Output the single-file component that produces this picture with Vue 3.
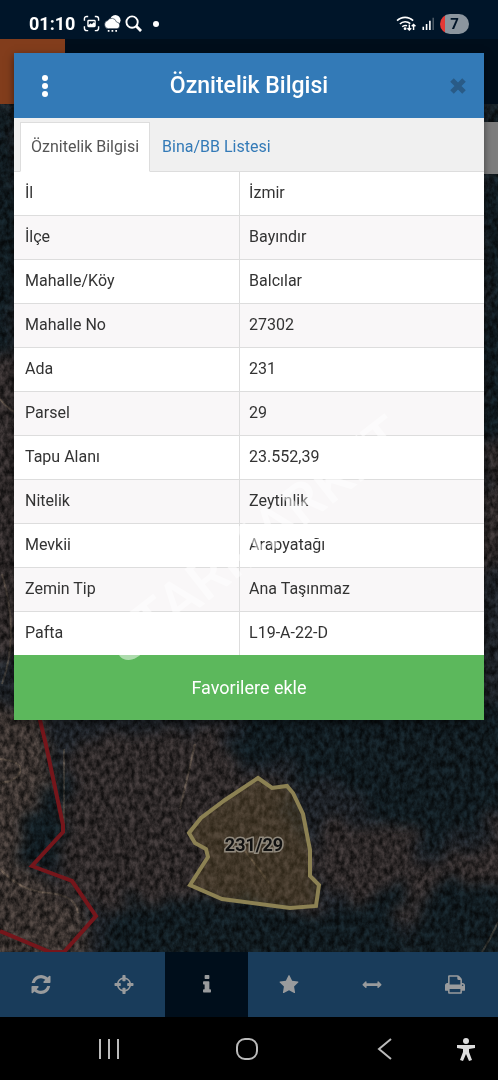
<script setup>
import { ref } from 'vue'

const activeTab = ref('oznitelik')
const activeTool = ref('info')

const rows = ref([
  { label: 'İl', value: 'İzmir' },
  { label: 'İlçe', value: 'Bayındır' },
  { label: 'Mahalle/Köy', value: 'Balcılar' },
  { label: 'Mahalle No', value: '27302' },
  { label: 'Ada', value: '231' },
  { label: 'Parsel', value: '29' },
  { label: 'Tapu Alanı', value: '23.552,39' },
  { label: 'Nitelik', value: 'Zeytinlik' },
  { label: 'Mevkii', value: 'Arapyatağı' },
  { label: 'Zemin Tip', value: 'Ana Taşınmaz' },
  { label: 'Pafta', value: 'L19-A-22-D' }
])

const tools = [
  {
    id: 'refresh',
    title: 'Yenile',
    box: '0 0 1536 1536',
    path: 'M1511 928q0 5-1 7-64 268-268 434.500T764 1536q-146 0-282.500-55T238 1324l-129 129q-19 19-45 19t-45-19-19-45V960q0-26 19-45t45-19h448q26 0 45 19t19 45-19 45l-137 137q71 66 161 102t187 36q134 0 250-65t186-179q11-17 53-117 8-23 30-23h192q13 0 22.500 9.500t9.500 22.500zm25-800v448q0 26-19 45t-45 19h-448q-26 0-45-19t-19-45 19-45l138-138Q969 256 768 256q-134 0-250 65T332 500q-11 17-53 117-8 23-30 23H50q-13 0-22.500-9.500T18 608v-7q65-268 270-434.500T768 0q146 0 284 55.500T1297 212l130-129q19-19 45-19t45 19 19 45z'
  },
  {
    id: 'locate',
    title: 'Konum',
    box: '0 0 1536 1536',
    path: 'M1197 896h-109q-26 0-45-19t-19-45V704q0-26 19-45t45-19h109q-32-108-112.500-188.500T896 339v109q0 26-19 45t-45 19H704q-26 0-45-19t-19-45V339q-108 32-188.500 112.500T339 640h109q26 0 45 19t19 45v128q0 26-19 45t-45 19H339q32 108 112.500 188.500T640 1197v-109q0-26 19-45t45-19h128q26 0 45 19t19 45v109q108-32 188.500-112.500T1197 896zm339-192v128q0 26-19 45t-45 19h-143q-37 161-154.500 278.500T896 1329v143q0 26-19 45t-45 19H704q-26 0-45-19t-19-45v-143q-161-37-278.500-154.500T207 896H64q-26 0-45-19T0 832V704q0-26 19-45t45-19h143q37-161 154.500-278.500T640 207V64q0-26 19-45t45-19h128q26 0 45 19t19 45v143q161 37 278.500 154.500T1329 640h143q26 0 45 19t19 45z'
  },
  {
    id: 'info',
    title: 'Bilgi',
    box: '-448 0 1536 1536',
    path: 'M640 1216v128q0 26-19 45t-45 19H64q-26 0-45-19t-19-45v-128q0-26 19-45t45-19h64V768H64q-26 0-45-19T0 704V576q0-26 19-45t45-19h384q26 0 45 19t19 45v576h64q26 0 45 19t19 45zM512 64v192q0 26-19 45t-45 19H192q-26 0-45-19t-19-45V64q0-26 19-45t45-19h256q26 0 45 19t19 45z'
  },
  {
    id: 'favorites',
    title: 'Favoriler',
    box: '0 0 1664 1664',
    path: 'M1664 615q0 22-26 48l-363 354 86 500q1 7 1 20 0 21-10.500 35.500T1321 1587q-19 0-40-12l-449-236-449 236q-22 12-40 12-21 0-31.500-14.500T301 1537q0-6 2-20l86-500L25 663Q0 636 0 615q0-37 56-46l502-73L783 41q19-41 49-41t49 41l225 455 502 73q56 9 56 46z'
  },
  {
    id: 'measure',
    title: 'Ölçüm',
    box: '0 -560 1792 1792',
    path: 'M1792 352q0 26-19 45l-256 256q-19 19-45 19t-45-19-19-45V480H384v128q0 26-19 45t-45 19-45-19L19 397Q0 378 0 352t19-45L275 51q19-19 45-19t45 19 19 45v128h1024V96q0-26 19-45t45-19 45 19l256 256q19 19 19 45z'
  },
  {
    id: 'print',
    title: 'Yazdır',
    box: '0 0 1664 1536',
    path: 'M384 1408h896v-256H384v256zm0-640h896V384h-160q-40 0-68-28t-28-68V128H384v640zm1152 64q0-26-19-45t-45-19-45 19-19 45 19 45 45 19 45-19 19-45zm128 0v416q0 13-9.500 22.500t-22.500 9.500h-224v160q0 40-28 68t-68 28H352q-40 0-68-28t-28-68v-160H32q-13 0-22.500-9.500T0 1248V832q0-79 56.500-135.500T192 640h64V96q0-40 28-68t68-28h672q40 0 88 20t76 48l152 152q28 28 48 76t20 88v256h64q79 0 135.500 56.500T1664 832z'
  }
]
</script>

<template>
  <div class="phone">
    <header class="status-bar">
      <div class="status-group">
        <span class="clock">01:10</span>
        <svg class="status-icon" viewBox="0 0 18 18">
          <path d="M1.500 6V4a2.500 2.500 0 0 1 2.500-2.500h1.500M12.500 1.500H14A2.500 2.500 0 0 1 16.500 4v2M16.500 12v2a2.500 2.500 0 0 1-2.500 2.500h-1.500M5.500 16.500H4A2.500 2.500 0 0 1 1.500 14v-2" fill="none" stroke="#fff" stroke-width="1.500" />
          <path fill-rule="evenodd" d="M6 5h6a1.500 1.500 0 0 1 1.500 1.500v5A1.500 1.500 0 0 1 12 13H6a1.500 1.500 0 0 1-1.500-1.500v-5A1.500 1.500 0 0 1 6 5zm0 5.500 2-1.800 1.400 1.100 1.800-2 1 .8V6.500H6z" fill="#fff" />
        </svg>
        <svg class="status-icon" viewBox="0 0 18 18">
          <circle cx="12" cy="5.500" r="5.500" fill="#fff" />
          <path d="M4.500 14.500a4.400 4.400 0 0 1-.7-8.600 5.200 5.200 0 0 1 9.400 1.500 3.600 3.600 0 0 1 .7 7.100z" fill="#fff" stroke="#001529" stroke-width=".6" />
          <path d="M4 16.800h1.800M8 16.800h1.800M12 16.800h1.800" stroke="#fff" stroke-width="1.800" />
        </svg>
        <svg class="status-icon" viewBox="0 0 18 18">
          <circle cx="7.500" cy="7.500" r="6" fill="none" stroke="#fff" stroke-width="2" />
          <path d="m11.500 11.500 5.500 5.500" stroke="#fff" stroke-width="3" />
        </svg>
        <span class="status-dot"></span>
      </div>
      <div class="status-group status-right">
        <svg class="wifi" viewBox="0 0 22 18">
          <path d="M1 6a12 12 0 0 1 17 0M4 9.500a8 8 0 0 1 11-.3M6.500 12.500a4.500 4.500 0 0 1 5-1" fill="none" stroke="#fff" stroke-width="1.700" />
          <path d="M14 10v6M12 14l2 2 2-2M18.500 16v-6M16.500 12l2-2 2 2" fill="none" stroke="#fff" stroke-width="1.500" />
          <circle cx="9.500" cy="14.500" r="1.500" fill="#fff" />
        </svg>
        <svg class="signal" viewBox="0 0 14 18">
          <path d="M2 12.500V16M5.500 9.500V16M9 6v10" stroke="#fff" stroke-width="1.700" />
          <path d="M12.500 3v13" stroke="#53606c" stroke-width="1.500" />
        </svg>
        <span class="battery">7</span>
      </div>
    </header>

    <main class="screen">
      <div class="app-header"><span class="menu-block"></span></div>

      <div class="map">
        <svg class="map-canvas" viewBox="0 0 498 848" preserveAspectRatio="xMidYMax slice">
          <defs>
            <filter id="grain" x="0" y="0" width="100%" height="100%" color-interpolation-filters="sRGB">
              <feTurbulence type="fractalNoise" baseFrequency="0.2 0.14" numOctaves="4" seed="8" />
              <feColorMatrix values="1.8 0 0 0 -0.4  1.8 0 0 0 -0.4  1.8 0 0 0 -0.4  0 0 0 0 1" />
            </filter>
            <filter id="soft" x="-20%" y="-20%" width="140%" height="140%" color-interpolation-filters="sRGB">
              <feTurbulence type="fractalNoise" baseFrequency="0.03" numOctaves="4" seed="3" />
              <feDisplacementMap in="SourceGraphic" scale="50" xChannelSelector="R" yChannelSelector="G" />
              <feGaussianBlur stdDeviation="6" />
            </filter>
          </defs>
          <rect width="498" height="848" fill="#1c2025" />
          <g filter="url(#soft)">
            <path d="M-40 600h76l24 120-30 50 62 40-30 70H-40z" class="soil-light" />
            <path d="M70 640l110-20 60 20 20 70-60 40 0 50-90 10-60-20z" class="soil" />
            <path d="M190 720l68-50 30 10 30 110-10 20-115-10z" class="soil" />
            <path d="M330 710l70 10 40 40 90-50v50l-120 60-60-20-40-50z" class="soil" />
            <path d="M230 600h300v100l-90 40-90-50-60-30-50-10z" class="forest" />
            <path d="M110 802l90-10 130 22 70-30 0 90H100z" class="forest" />
            <path d="M410 800l120-40v120H400z" class="forest" />
            <path d="M52 640l15 90-30 36-25-15 25-40z" class="forest" />
            <path d="M-20 0h40v240l-40 30zM480 0h60v330h-60z" class="forest" />
            <path d="M-20 250l50 20v260l-50 30zM480 340h50v120h-50z" class="soil" />
          </g>
          <g class="tracks">
            <path d="M0 655q22 2 20 12t-20 12M2 470q18 60 0 110M64 645v75M0 765q20 22 48 24t30 20M498 818q-6 14-16 30M195 640l-15 65M0 295q8 10 15 13M240 740l30 40" />
          </g>
          <rect width="498" height="848" filter="url(#grain)" class="grain" />
          <path d="M258 674l14 10 15-2 6 7 10 21 7 36v26l9 9-3 21-26 2-68-9-32-14 18-28-2-8-11-6-6-10 12-15 24-18z" class="parcel" />
          <path d="M39 612l7 29 17 80v7l-31 34 40 15 24 35-32 36H50L0 827" class="border-line" />
          <text x="254" y="747" class="parcel-label">231/29</text>
        </svg>
        <span class="side-button"></span>
      </div>

      <nav class="toolbar">
        <button
          v-for="t in tools"
          :key="t.id"
          type="button"
          :class="['tool', { active: activeTool === t.id }]"
          :aria-label="t.title"
          @click="activeTool = t.id"
        >
          <svg :viewBox="t.box" class="tool-icon"><path :d="t.path" /></svg>
        </button>
      </nav>

      <section class="modal">
        <div class="modal-header">
          <button type="button" class="header-btn" aria-label="Menü">
            <svg viewBox="0 0 24 24"><circle cx="12" cy="4" r="3" /><circle cx="12" cy="12" r="3" /><circle cx="12" cy="20" r="3" /></svg>
          </button>
          <h1>Öznitelik Bilgisi</h1>
          <button type="button" class="header-btn close" aria-label="Kapat">
            <svg viewBox="0 0 24 24"><path d="M6 6l12 12M18 6L6 18" /></svg>
          </button>
        </div>

        <div class="tabs">
          <button type="button" :class="['tab', { selected: activeTab === 'oznitelik' }]" @click="activeTab = 'oznitelik'">Öznitelik Bilgisi</button>
          <button type="button" :class="['tab', { selected: activeTab === 'bina' }]" @click="activeTab = 'bina'">Bina/BB Listesi</button>
        </div>

        <table class="info-table">
          <tbody>
            <tr v-for="r in rows" :key="r.label">
              <th scope="row">{{ r.label }}</th>
              <td>{{ r.value }}</td>
            </tr>
          </tbody>
        </table>

        <button type="button" class="favorite">Favorilere ekle</button>
        <span class="watermark" aria-hidden="true">STARMARKET</span>
      </section>
    </main>

    <footer class="system-nav">
      <button type="button" class="nav-btn" aria-label="Son uygulamalar">
        <svg viewBox="0 0 24 24"><path d="M3 2v20M12 2v20M21 2v20" /></svg>
      </button>
      <button type="button" class="nav-btn" aria-label="Ana ekran">
        <svg viewBox="0 0 24 24"><rect x="2" y="2" width="20" height="20" rx="8" /></svg>
      </button>
      <button type="button" class="nav-btn" aria-label="Geri">
        <svg viewBox="0 0 24 24"><path d="M18 2L6 12l12 10" /></svg>
      </button>
      <button type="button" class="nav-btn access" aria-label="Erişilebilirlik">
        <svg viewBox="0 0 24 24"><circle cx="12" cy="4" r="3" /><path d="M3 8h18v3l-6 1v3l3 8-3 1-3-7-3 7-3-1 3-8v-3l-6-1z" /></svg>
      </button>
    </footer>
  </div>
</template>

<style>
body { margin: 0; background: #000; }
</style>

<style scoped>
.phone {
  display: flex;
  flex-direction: column;
  min-height: 100vh;
  font-family: Roboto, "Liberation Sans", sans-serif;
  color: #333;
}

button {
  padding: 0;
  border: 0;
  background: none;
  font: inherit;
  cursor: pointer;
}

svg { display: block; }

/* --- STATUS BAR --- */
.status-bar {
  display: flex;
  justify-content: space-between;
  align-items: center;
  box-sizing: border-box;
  height: 39px;
  padding: 8px 29px 0;
  background: #001529;
}

.status-group { display: flex; align-items: center; gap: 4px; }
.clock { margin-right: 4px; color: #fff; font-size: 18px; font-weight: bold; line-height: 20px; }
.status-icon { width: 17px; height: 17px; }
.status-dot { width: 6px; height: 6px; margin-left: 7px; border-radius: 50%; background: #fff; }
.wifi { width: 21px; height: 17px; }
.signal { width: 14px; height: 17px; margin-right: 1px; }

.battery {
  width: 29px;
  border-radius: 10px;
  background: linear-gradient(90deg, #e53935 5px, #8b959e 5px);
  color: #001529;
  font-size: 15px;
  font-weight: bold;
  line-height: 20px;
  text-align: center;
}

/* --- MAP --- */
.screen { position: relative; display: flex; flex: 1; flex-direction: column; }
.app-header { display: flex; height: 65px; background: #000e1b; }
.menu-block { width: 65px; background: #823d1c; }
.map { position: relative; flex: 1; overflow: hidden; background: #1c2025; }
.map-canvas { position: absolute; width: 100%; height: 100%; }
.side-button { position: absolute; top: 18px; right: 0; width: 16px; height: 52px; background: #7d7d7d; }
.forest { fill: #101a1f; }
.soil { fill: #2c2727; }
.soil-light { fill: #37302d; }
.grain { mix-blend-mode: overlay; opacity: 0.6; }
.tracks { fill: none; stroke: #82705e; stroke-width: 2; opacity: 0.3; }
.parcel { fill: rgba(115, 94, 48, 0.3); stroke: #8c8153; stroke-width: 4; }
.border-line { fill: none; stroke: #75161b; stroke-width: 4; }

.parcel-label {
  fill: #111;
  stroke: #8f887c;
  stroke-width: 3;
  paint-order: stroke;
  font-size: 18px;
  font-weight: bold;
  text-anchor: middle;
}

/* --- TOOLBAR --- */
.toolbar { display: flex; height: 65px; padding-right: 2px; background: #193c5b; }
.tool { display: flex; flex: 1; align-items: center; justify-content: center; }
.tool.active { background: #000e1b; }
.tool-icon { width: 20px; height: 19px; fill: #999b9d; }

/* --- MODAL --- */
.modal {
  position: absolute;
  top: 14px;
  left: 14px;
  right: 14px;
  overflow: hidden;
  background: #fff;
  box-shadow: 0 3px 8px rgba(0, 0, 0, 0.5);
}

.modal-header {
  display: flex;
  align-items: center;
  justify-content: space-between;
  height: 65px;
  padding: 0 14px;
  background: #337ab7;
}

.modal-header h1 { margin: 0; color: #fff; font-size: 23px; font-weight: 500; line-height: 32px; }
.header-btn { display: flex; align-items: center; justify-content: center; width: 34px; height: 44px; }
.header-btn svg { width: 24px; height: 24px; fill: #fff; }
.header-btn.close { justify-content: flex-end; }
.header-btn.close svg { stroke: #295b87; stroke-width: 5; }

.tabs {
  display: flex;
  align-items: flex-end;
  height: 53px;
  padding: 0 6px;
  border-bottom: 1px solid #ddd;
  background: #f0f0f0;
}

.tab {
  height: 50px;
  margin-bottom: -1px;
  padding: 0 10px 2px;
  border: 1px solid transparent;
  color: #337ab7;
  font-size: 16px;
}

.tab + .tab { margin-left: 1px; }
.tab.selected { border-color: #ddd; border-bottom-color: #fff; background: #fff; color: #555; }

.info-table { width: 100%; table-layout: fixed; border-collapse: collapse; font-size: 16px; line-height: 23px; }
.info-table tr:nth-child(even) { background: #f9f7f8; }
.info-table tr + tr { border-top: 1px solid #ddd; }
.info-table th, .info-table td { box-sizing: border-box; padding: 9px 11px 11px; text-align: left; font-weight: normal; }
.info-table th { width: 48%; border-right: 1px solid #ddd; }
.info-table td { padding-left: 9px; }

.favorite {
  display: block;
  width: 100%;
  height: 65px;
  background: #5cb85c;
  color: #fff;
  font-size: 18px;
}

.watermark {
  position: absolute;
  top: 457px;
  left: 61px;
  color: rgba(255, 255, 255, 0.5);
  font-size: 56px;
  font-weight: 500;
  line-height: 60px;
  transform: rotate(-38deg);
  pointer-events: none;
}

/* --- SYSTEM NAVIGATION --- */
.system-nav { display: flex; align-items: center; height: 63px; padding: 0 20px 0 40px; background: #000; }
.nav-btn { display: flex; flex: 1; justify-content: center; }
.nav-btn svg { width: 24px; height: 24px; fill: none; stroke: #bbb; stroke-width: 2; }
.nav-btn.access { flex: none; }
.nav-btn.access svg { fill: #ddd; stroke: none; }
</style>
